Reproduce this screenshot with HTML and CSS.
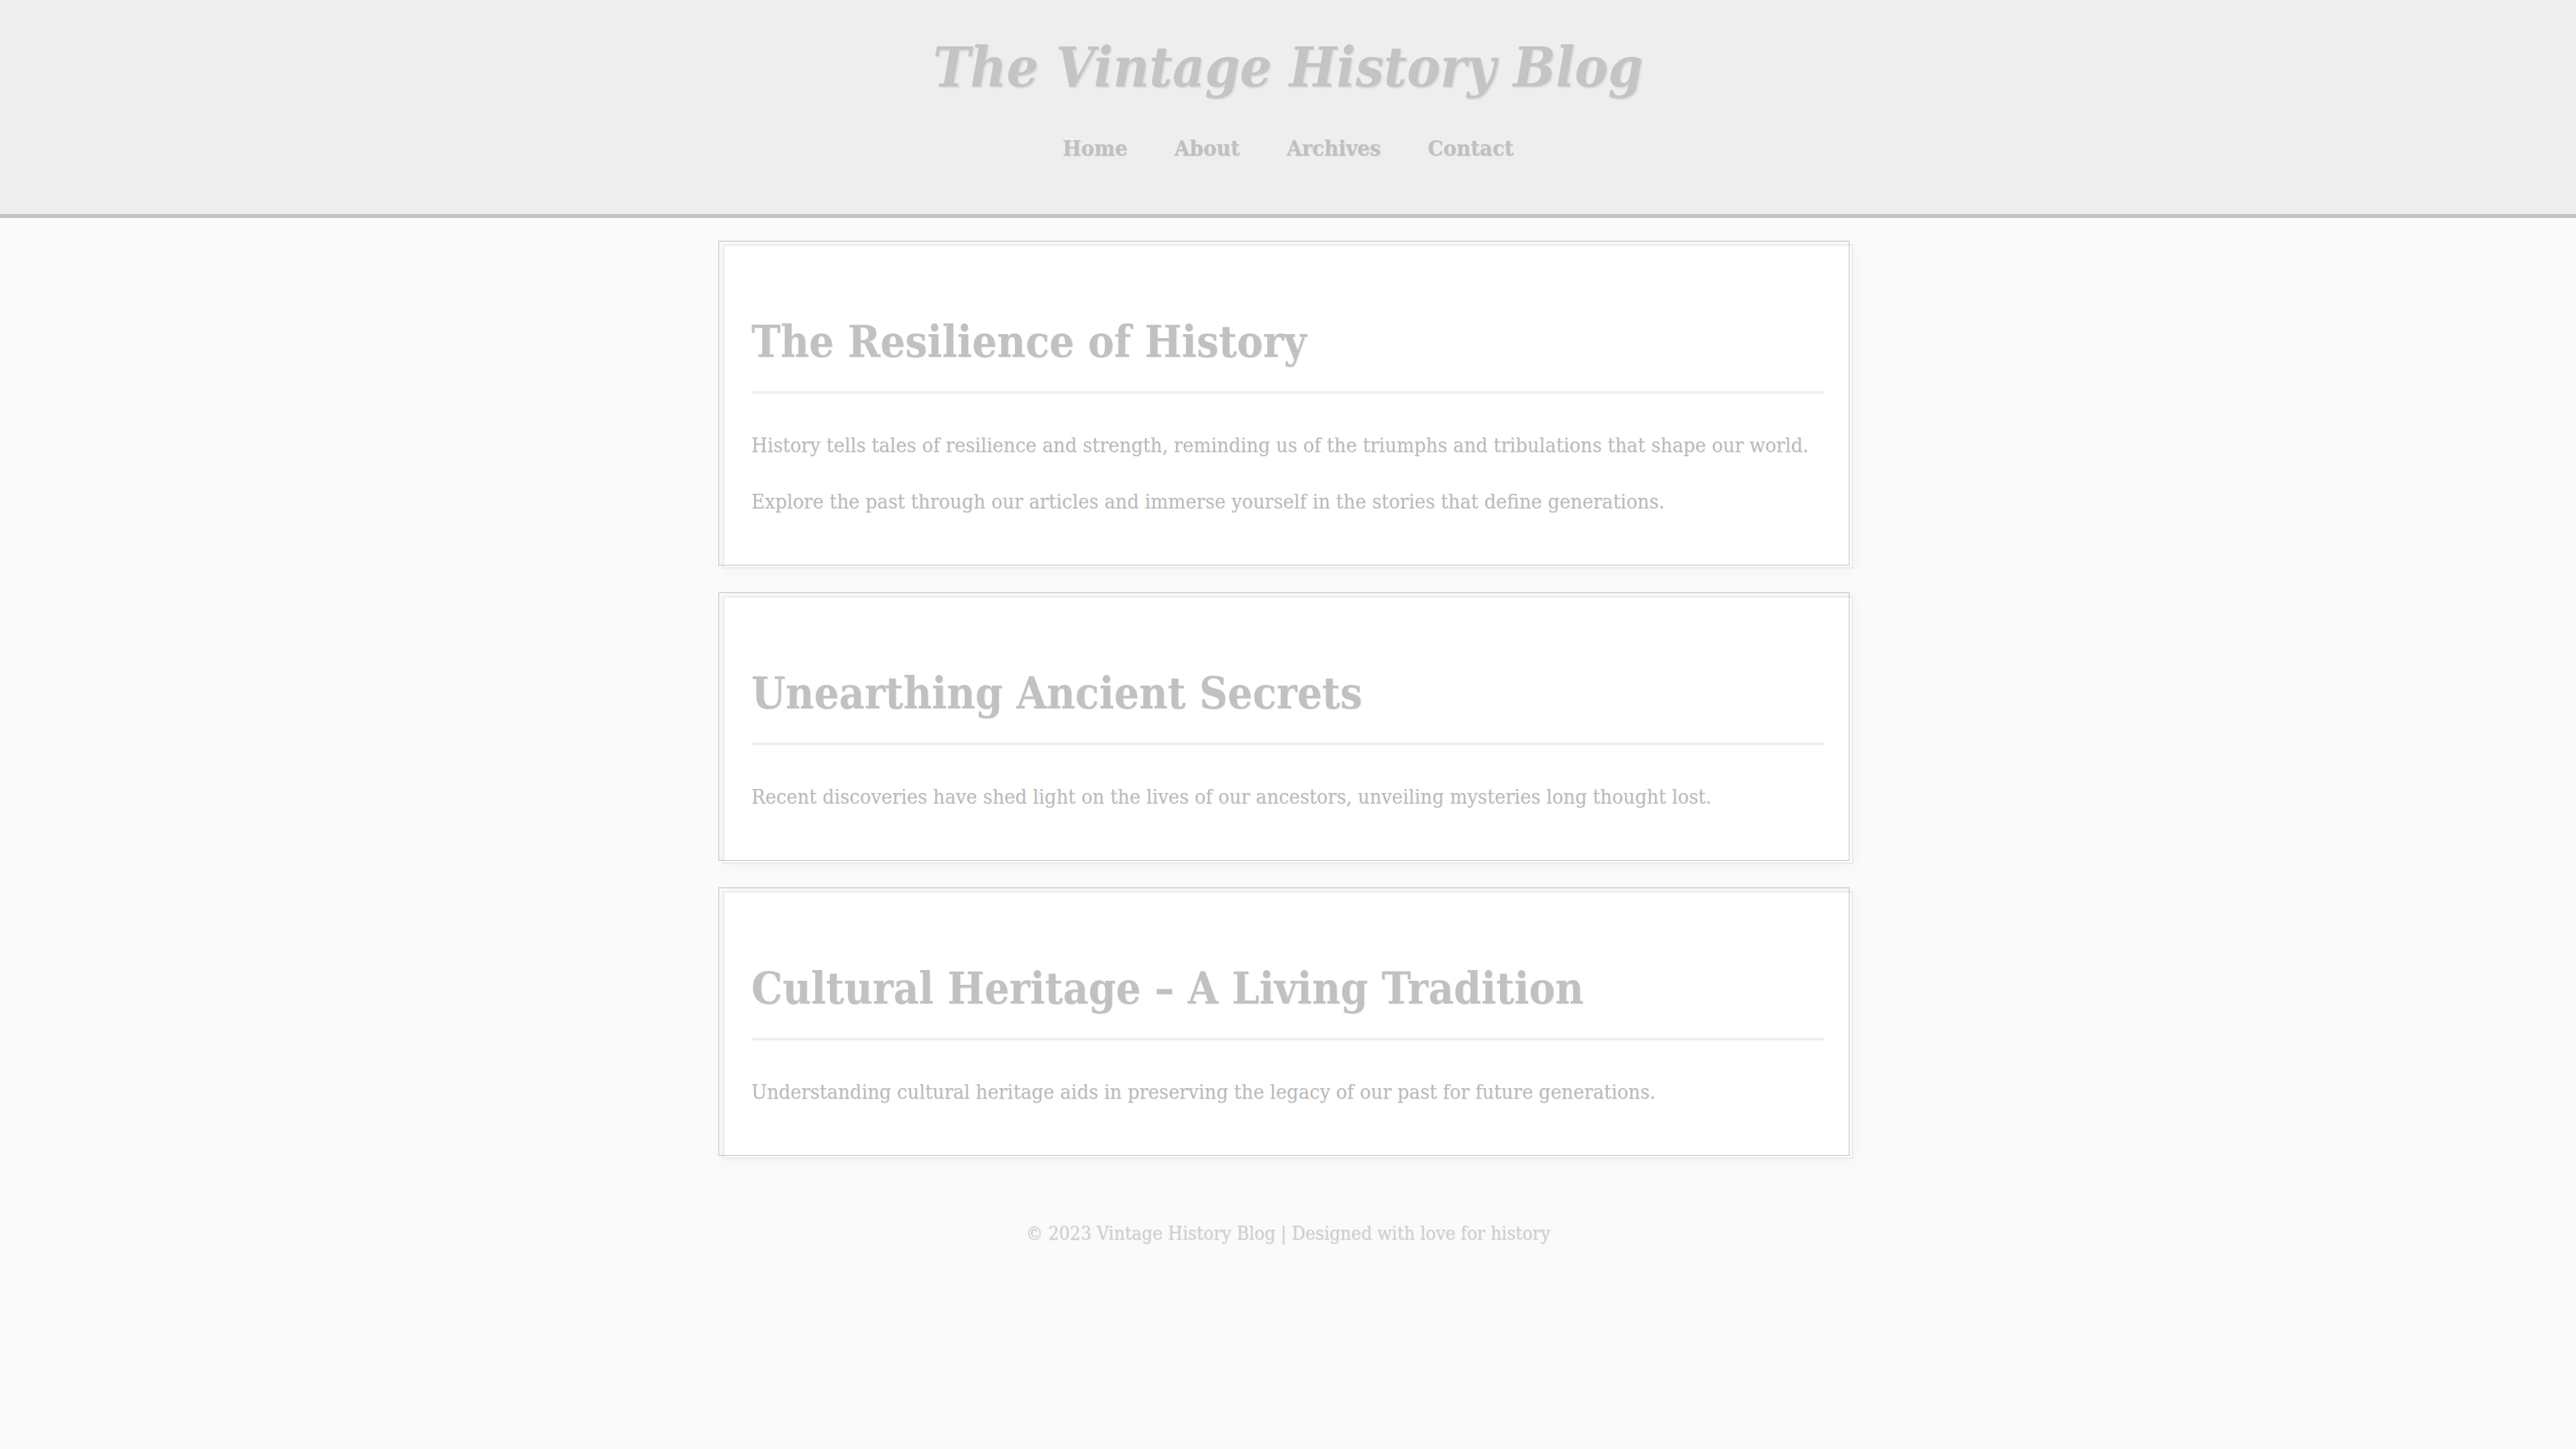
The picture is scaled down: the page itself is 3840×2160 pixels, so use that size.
FILE: index.html
```html
<!DOCTYPE html>
<html lang="en">
<head>
<meta charset="utf-8">
<title>The Vintage History Blog</title>
<link rel="stylesheet" href="styles.css">
</head>
<body>
<header class="site-header">
  <h1 class="site-title">The Vintage History Blog</h1>
  <nav class="site-nav">
    <a href="#" class="nav-link">Home</a>
    <a href="#" class="nav-link">About</a>
    <a href="#" class="nav-link">Archives</a>
    <a href="#" class="nav-link">Contact</a>
  </nav>
</header>
<main class="posts">
  <article class="post">
    <h2 class="post-title">The Resilience of History</h2>
    <p class="post-text">History tells tales of resilience and strength, reminding us of the triumphs and tribulations that shape our world.</p>
    <p class="post-text">Explore the past through our articles and immerse yourself in the stories that define generations.</p>
  </article>
  <article class="post">
    <h2 class="post-title">Unearthing Ancient Secrets</h2>
    <p class="post-text">Recent discoveries have shed light on the lives of our ancestors, unveiling mysteries long thought lost.</p>
  </article>
  <article class="post">
    <h2 class="post-title">Cultural Heritage – A Living Tradition</h2>
    <p class="post-text">Understanding cultural heritage aids in preserving the legacy of our past for future generations.</p>
  </article>
</main>
<footer class="site-footer">© 2023 Vintage History Blog | Designed with love for history</footer>
</body>
</html>
```
FILE: styles.css
```css
html, body {
  margin: 0;
  padding: 0;
}
body {
  background: #fafafa;
  font-family: Georgia, "DejaVu Serif", serif;
  font-stretch: condensed;
  color: #bdbdbd;
  min-height: 2160px;
}
.site-header {
  background: #eeeeee;
  border-bottom: 6px solid #c4c4c4;
  padding: 50px 0 78px;
  text-align: center;
}
.site-title {
  margin: 0;
  font-size: 83px;
  line-height: 100px;
  font-weight: bold;
  font-style: italic;
  color: #c4c4c4;
  text-shadow: 2px 2px 2px rgba(0, 0, 0, 0.08);
}
.site-nav {
  margin-top: 51px;
  display: flex;
  justify-content: center;
  gap: 70px;
}
.nav-link {
  font-size: 32.5px;
  line-height: 40px;
  font-weight: bold;
  color: #c0c0c0;
  text-decoration: none;
  text-shadow: 1px 1px 1px rgba(0, 0, 0, 0.1);
}
.posts {
  width: 1686px;
  margin: 39px auto 0;
  display: flex;
  flex-direction: column;
  gap: 40px;
}
.post {
  position: relative;
  box-sizing: border-box;
  background: #ffffff;
  border: 3px solid #eeeeee;
  padding: 40px 40px 74px;
  box-shadow: 0 3px 22px rgba(0, 0, 0, 0.035);
}
.post::before {
  content: "";
  position: absolute;
  top: -8px;
  left: -9px;
  right: 3px;
  bottom: 2px;
  border: 1px solid #bdbdbd;
  pointer-events: none;
}
.post-title {
  margin: 62px 0 54px;
  padding-bottom: 34px;
  border-bottom: 4px solid #efefef;
  font-size: 65px;
  line-height: 80px;
  font-weight: bold;
  color: #c1c1c1;
  text-shadow: 1px 1px 1px rgba(0, 0, 0, 0.08);
}
.post-text {
  margin: 0;
  font-size: 30.5px;
  line-height: 46px;
  color: #bababa;
  text-shadow: 1px 1px 1px rgba(0, 0, 0, 0.06);
}
.post-text + .post-text {
  margin-top: 38px;
}
.site-footer {
  margin-top: 91px;
  text-align: center;
  font-size: 28px;
  line-height: 40px;
  color: #cfcfcf;
  text-shadow: 1px 1px 1px rgba(0, 0, 0, 0.08);
}
```
